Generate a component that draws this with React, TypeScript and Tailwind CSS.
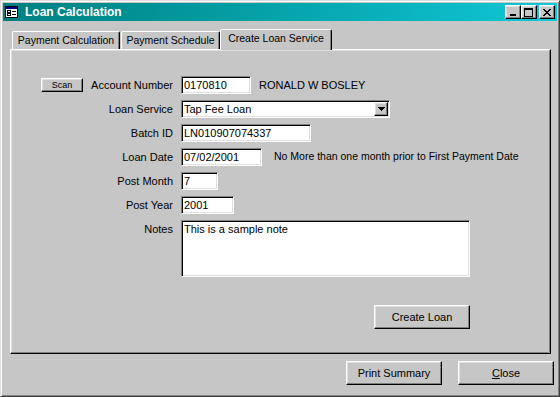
import React from "react";

const raised =
  "border border-t-white border-l-white border-r-black border-b-black shadow-[inset_-1px_-1px_0_#808080,inset_1px_1px_0_#dfdfdf] bg-[#c6c6c6]";
const sunken =
  "border border-t-[#808080] border-l-[#808080] border-r-white border-b-white shadow-[inset_1px_1px_0_#000,inset_-1px_-1px_0_#dfdfdf] bg-white";

function FormIcon() {
  return (
    <svg width="13" height="12" viewBox="0 0 13 12" shapeRendering="crispEdges">
      <rect x="0.5" y="0.5" width="12" height="11" fill="#fff" stroke="#000" />
      <rect x="1" y="1" width="11" height="2" fill="#000080" />
      <rect x="2.5" y="4.5" width="3" height="2" fill="none" stroke="#000" />
      <rect x="2.5" y="7.5" width="3" height="2" fill="none" stroke="#000" />
      <rect x="7" y="5" width="4" height="1" fill="#000" />
      <rect x="7" y="8" width="4" height="1" fill="#000" />
    </svg>
  );
}

function CaptionButton({ kind }: { kind: "min" | "max" | "close" }) {
  return (
    <div className={`w-[16px] h-[14px] flex items-center justify-center ${raised}`}>
      <svg width="10" height="9" viewBox="0 0 10 9" shapeRendering="crispEdges">
        {kind === "min" && <rect x="2" y="6" width="6" height="2" fill="#000" />}
        {kind === "max" && (
          <>
            <rect x="0.5" y="0.5" width="8" height="8" fill="none" stroke="#000" />
            <rect x="0" y="0" width="9" height="2" fill="#000" />
          </>
        )}
        {kind === "close" && (
          <path d="M1 1h2v1h1v1h2v-1h1v-1h2v1h-1v1h-1v1h-1v1h1v1h1v1h1v1h-2v-1h-1v-1h-2v1h-1v1h-2v-1h1v-1h1v-1h1v-1h-1v-1h-1v-1h-1z" fill="#000" />
        )}
      </svg>
    </div>
  );
}

function Row({ label, children, top }: { label: React.ReactNode; children: React.ReactNode; top?: boolean }) {
  return (
    <div className={`flex ${top ? "items-start" : "items-center"}`}>
      <div className="w-[163px] h-[18px] flex items-center justify-end gap-[8px] pr-[1px]">{label}</div>
      <div className="ml-[7px] flex items-center">{children}</div>
    </div>
  );
}

function Field({ w, value }: { w: string; value: string }) {
  return <div className={`${w} h-[18px] ${sunken} flex items-center pl-[2px] leading-none`}>{value}</div>;
}

export default function App() {
  return (
    <div
      className="w-[560px] h-[397px] bg-[#c6c6c6] border border-t-[#dfdfdf] border-l-[#dfdfdf] border-r-[#404040] border-b-[#404040] shadow-[inset_1px_1px_0_#fff,inset_-1px_-1px_0_#808080] p-[2px] flex flex-col text-[11px] text-black overflow-hidden"
      style={{ fontFamily: '"Liberation Sans", Arial, sans-serif' }}
    >
      {/* title bar */}
      <div className="h-[18px] flex items-center pl-[2px] pr-[2px] bg-gradient-to-r from-[#008080] to-[#10c8d8]">
        <FormIcon />
        <span className="ml-[7px] text-white font-bold text-[12px]">Loan Calculation</span>
        <div className="ml-auto flex items-center">
          <CaptionButton kind="min" />
          <CaptionButton kind="max" />
          <div className="ml-[2px]">
            <CaptionButton kind="close" />
          </div>
        </div>
      </div>

      {/* tabs */}
      <div className="mt-[8px] ml-[9px] h-[20px] flex items-end text-[10.5px]">
        <div className="w-[108px] h-[18px] rounded-t-[2px] border-t border-l border-r border-t-white border-l-white border-r-black shadow-[inset_-1px_0_0_#808080] flex items-center justify-center">
          Payment Calculation
        </div>
        <div className="ml-[1px] w-[99px] h-[18px] rounded-t-[2px] border-t border-l border-r border-t-white border-l-white border-r-black shadow-[inset_-1px_0_0_#808080] flex items-center justify-center">
          Payment Schedule
        </div>
        <div className="relative z-10 -mb-[1px] w-[112px] h-[21px] bg-[#c6c6c6] rounded-t-[2px] border-t border-l border-r border-t-white border-l-white border-r-black shadow-[inset_-1px_0_0_#808080] flex items-center justify-center pb-[2px]">
          Create Loan Service
        </div>
      </div>

      {/* panel */}
      <div className={`ml-[7px] w-[541px] h-[305px] ${raised} pt-[26px] flex flex-col gap-[6px]`}>
        <Row
          label={
            <>
              <button className={`w-[42px] h-[14px] ${raised} text-[9px] leading-none flex items-center justify-center`}>
                Scan
              </button>
              <span>Account Number</span>
            </>
          }
        >
          <Field w="w-[70px]" value="0170810" />
          <span className="ml-[8px]">RONALD W BOSLEY</span>
        </Row>
        <Row label="Loan Service">
          <div className={`w-[209px] h-[18px] ${sunken} flex items-center pl-[2px] pr-[1px]`}>
            <span className="flex-1">Tap Fee Loan</span>
            <div className={`w-[14px] h-[14px] ${raised} flex items-center justify-center`}>
              <svg width="7" height="4" viewBox="0 0 7 4" shapeRendering="crispEdges">
                <path d="M0 0h7v1h-1v1h-1v1h-1v1h-1v-1h-1v-1h-1v-1h-1z" fill="#000" />
              </svg>
            </div>
          </div>
        </Row>
        <Row label="Batch ID">
          <Field w="w-[130px]" value="LN010907074337" />
        </Row>
        <Row label="Loan Date">
          <Field w="w-[81px]" value="07/02/2001" />
          <span className="ml-[12px] text-[10.5px]">No More than one month prior to First Payment Date</span>
        </Row>
        <Row label="Post Month">
          <Field w="w-[37px]" value="7" />
        </Row>
        <Row label="Post Year">
          <Field w="w-[53px]" value="2001" />
        </Row>
        <Row label="Notes" top>
          <div className={`w-[289px] h-[57px] ${sunken} pl-[2px] pt-[3px] leading-none`}>This is a sample note</div>
        </Row>
        <div className="ml-[170px] w-[289px] mt-[22px] flex justify-end">
          <button className={`w-[96px] h-[24px] ${raised} text-[11px]`}>Create Loan</button>
        </div>
      </div>

      {/* bottom buttons */}
      <div className="mt-[7px] flex justify-end gap-[16px] pr-[3px]">
        <button className={`w-[96px] h-[24px] ${raised} text-[11px]`}>Print Summary</button>
        <button className={`w-[96px] h-[24px] ${raised} text-[11px]`}>
          <span className="underline">C</span>lose
        </button>
      </div>
    </div>
  );
}
